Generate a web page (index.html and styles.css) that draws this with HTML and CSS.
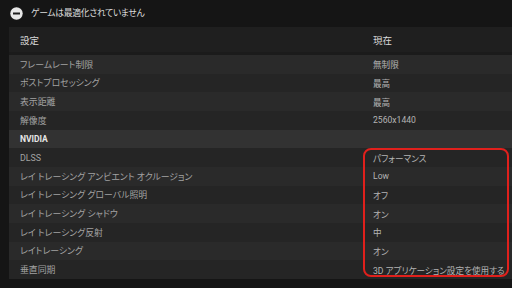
FILE: index.html
```html
<!DOCTYPE html>
<html lang="ja">
<head>
<meta charset="utf-8">
<link rel="stylesheet" href="styles.css">
</head>
<body>
<div class="page">
  <div class="topbar">
    <svg class="icon" width="13" height="13" viewBox="0 0 13 13"><circle cx="6.5" cy="6.5" r="6.2" fill="#e6e6e6"/><rect x="3" y="5.5" width="7" height="2" fill="#1a1a1a"/></svg>
    <span class="title">ゲームは最適化されていません</span>
  </div>
  <div class="table">
    <div class="head"><div class="c1">設定</div><div class="c2">現在</div></div>
    <div class="gap"></div>
    <div class="row odd"><div class="c1">フレームレート制限</div><div class="c2">無制限</div></div>
    <div class="row even"><div class="c1">ポストプロセッシング</div><div class="c2">最高</div></div>
    <div class="row odd"><div class="c1">表示距離</div><div class="c2">最高</div></div>
    <div class="row even"><div class="c1">解像度</div><div class="c2">2560x1440</div></div>
    <div class="row group"><div class="c1">NVIDIA</div><div class="c2"></div></div>
    <div class="row even"><div class="c1">DLSS</div><div class="c2">パフォーマンス</div></div>
    <div class="row odd"><div class="c1">レイ トレーシング アンビエント オクルージョン</div><div class="c2">Low</div></div>
    <div class="row even"><div class="c1">レイ トレーシング グローバル照明</div><div class="c2">オフ</div></div>
    <div class="row odd"><div class="c1">レイ トレーシング シャドウ</div><div class="c2">オン</div></div>
    <div class="row even"><div class="c1">レイ トレーシング反射</div><div class="c2">中</div></div>
    <div class="row odd"><div class="c1">レイトレーシング</div><div class="c2">オン</div></div>
    <div class="row even"><div class="c1">垂直同期</div><div class="c2">3D アプリケーション設定を使用する</div></div>
    <div class="highlight"></div>
  </div>
</div>
</body>
</html>
```
FILE: styles.css
```css
html, body {
  margin: 0;
  padding: 0;
  background: #151515;
  width: 512px;
  height: 288px;
  overflow: hidden;
  font-family: "Noto Sans CJK JP", "Noto Sans", sans-serif;
}
.page {
  display: flex;
  flex-direction: column;
}
.topbar {
  height: 27px;
  display: flex;
  align-items: center;
  gap: 8px;
  padding-left: 10px;
  box-sizing: border-box;
}
.icon { display: block; }
.title {
  color: #dcdcdc;
  font-size: 8.8px;
  letter-spacing: -0.3px;
  line-height: 1;
  font-feature-settings: "palt";
}
.table {
  margin-left: 9px;
  position: relative;
  display: flex;
  flex-direction: column;
}
.head, .row {
  display: grid;
  grid-template-columns: 353px 1fr;
  align-items: center;
}
.head {
  height: 25px;
  background: #1f1f1f;
  color: #d8d8d8;
  font-size: 9.5px;
}
.gap {
  height: 3px;
  background: #1b1b1b;
}
.c1 { padding-left: 11px; white-space: nowrap; }
.c2 { padding-left: 11px; white-space: nowrap; }
.row {
  height: 18.67px;
  font-size: 8.9px;
  color: #a2a2a2;
  font-family: "Roboto", "Noto Sans CJK JP", sans-serif;
  font-feature-settings: "palt";
}
.row .c2 { color: #b4b4b4; font-size: 8.6px; }
.odd { background: #2a2a2a; }
.even { background: #252525; }
.group {
  background: #323232;
  color: #e6e6e6;
  font-weight: bold;
  font-size: 8.5px;
}
.highlight {
  position: absolute;
  left: 354px;
  top: 121px;
  width: 146px;
  height: 129px;
  border: 2.5px solid #e0201c;
  border-radius: 8px;
  box-sizing: border-box;
}
```
